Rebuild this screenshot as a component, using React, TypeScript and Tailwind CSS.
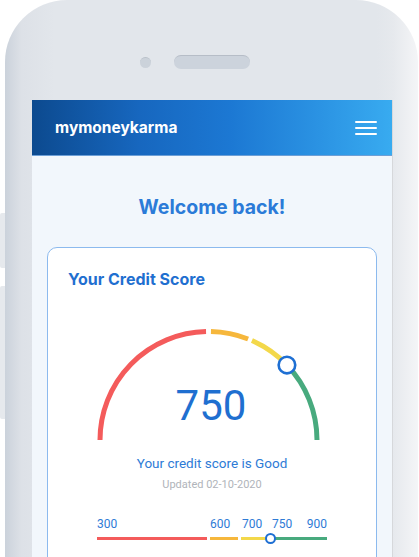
import React from "react";

const CX = 160.5;
const CY = 115;
const R = 108.5;

function pt(deg: number) {
  const a = (deg * Math.PI) / 180;
  return [CX + R * Math.cos(a), CY - R * Math.sin(a)];
}

function arc(from: number, to: number) {
  const [x1, y1] = pt(from);
  const [x2, y2] = pt(to);
  return `M ${x1.toFixed(2)} ${y1.toFixed(2)} A ${R} ${R} 0 0 1 ${x2.toFixed(2)} ${y2.toFixed(2)}`;
}

const marker = pt(43.7);

export default function App() {
  return (
    <div className="w-[419px] h-[557px] overflow-hidden bg-white flex" style={{ fontFamily: "Inter, 'Noto Sans', sans-serif" }}>
      {/* side buttons */}
      <div className="w-[5px] shrink-0 flex flex-col">
        <div className="mt-[213px] h-[55px] bg-[#e6e9ed] rounded-l-[2px]" />
        <div className="mt-[18px] h-[133px] bg-[#e6e9ed] rounded-l-[2px]" />
      </div>
      {/* phone */}
      <div className="w-[413px] shrink-0 h-[700px] rounded-t-[62px] bg-[linear-gradient(to_right,#cbd2db_0%,#dde1e7_4%,#e2e6eb_12%,#e2e6eb_90%,#e6e9ed_94%,#f4f5f7_100%)] flex flex-col">
        <div className="mt-[55px] h-[14px] flex items-center">
          <div className="ml-[135px] w-[11px] h-[11px] rounded-full bg-[#cbd2da] border-t border-[#b9c0c9]" />
          <div className="ml-[23px] w-[76px] h-[14px] rounded-full bg-[#ccd3dc] border-t border-[#b6bdc7]" />
        </div>
        <div className="mt-[31px] ml-[27px] w-[361px] flex-1 bg-[#f2f7fc] border-r border-[#d6d8db] flex flex-col">
          {/* header */}
          <div className="h-[56px] shrink-0 bg-[linear-gradient(to_right,#0c4a8f_0%,#1767bf_30%,#1c78d3_55%,#2b93e3_80%,#38abf0_100%)] border-b border-[#6d9fd6] flex items-center justify-between pl-[23px] pr-[15px]">
            <span className="text-white font-bold text-[15.5px] leading-none">mymoneykarma</span>
            <div className="flex flex-col gap-[4px] w-[22px]">
              <div className="h-[2px] bg-white rounded" />
              <div className="h-[2px] bg-white rounded" />
              <div className="h-[2px] bg-white rounded" />
            </div>
          </div>
          {/* body */}
          <div className="pt-[37px] flex flex-col items-center">
            <h1 className="text-[19.5px] leading-[28px] font-bold text-[#2b7bd8]">Welcome back!</h1>
          </div>
          <div className="mt-[26px] mx-[15px] flex-1 bg-white border border-[#8cbaee] rounded-[10px] flex flex-col" style={{ fontFamily: "Roboto, 'Noto Sans', sans-serif" }}>
            <h2 className="pt-[19px] pl-[20px] text-[16px] leading-[24px] font-bold text-[#1f6fd0]" style={{ fontFamily: "Inter, 'Noto Sans', sans-serif" }}>Your Credit Score</h2>
            <div className="relative mt-[34px] h-[120px] w-full">
              <svg className="absolute inset-0" width="327" height="120" viewBox="0 0 327 120">
                <path d={arc(180, 91.3)} stroke="#f45b5b" strokeWidth="5" fill="none" />
                <path d={arc(88.7, 68.6)} stroke="#f6b73c" strokeWidth="5" fill="none" />
                <path d={arc(66.4, 43.7)} stroke="#f3d84a" strokeWidth="5" fill="none" />
                <path d={arc(43.7, 0)} stroke="#48aa7e" strokeWidth="5" fill="none" />
                <circle cx={marker[0]} cy={marker[1]} r="8.3" fill="white" stroke="#1e6fd3" strokeWidth="2.6" />
              </svg>
              <div className="absolute left-0 right-0 top-[60px] flex justify-center">
                <span className="ml-[-2px] text-[42px] leading-[42px] text-[#1f6fd0]">750</span>
              </div>
            </div>
            <p className="mt-[8px] text-center text-[13.5px] leading-[20px] text-[#2e7bd6]">Your credit score is Good</p>
            <p className="mt-[4px] text-center text-[11px] leading-[16px] text-[#b0b4ba]">Updated 02-10-2020</p>
            <div className="mt-[23px] ml-[49px] w-[230px] flex text-[12px] leading-[16px] text-[#2e7bd6]">
              <span className="w-[113px]">300</span>
              <span className="w-[32px]">600</span>
              <span className="w-[30px]">700</span>
              <span>750</span>
              <span className="ml-auto">900</span>
            </div>
            <div className="relative mt-[0.5px] ml-[49px] w-[230px] h-[11px] flex items-center">
              <div className="w-[110px] h-[3px] bg-[#f45b5b]" />
              <div className="ml-[3px] w-[28px] h-[3px] bg-[#f6b73c]" />
              <div className="ml-[3px] w-[29px] h-[3px] bg-[#f3d84a]" />
              <div className="flex-1 h-[3px] bg-[#48aa7e]" />
              <div className="absolute left-[167.5px] top-0 w-[11px] h-[11px] rounded-full bg-white border-2 border-[#1e6fd3]" />
            </div>
            <div className="mt-[10px] ml-[49px] w-[250px] flex text-[11px] leading-[16px] text-[#9aa0a6]">
              <span className="w-[115px]">Poor</span>
              <span className="w-[31px]">Avg</span>
              <span className="w-[45px]">Good</span>
              <span>Excellent</span>
            </div>
          </div>
        </div>
      </div>
    </div>
  );
}
